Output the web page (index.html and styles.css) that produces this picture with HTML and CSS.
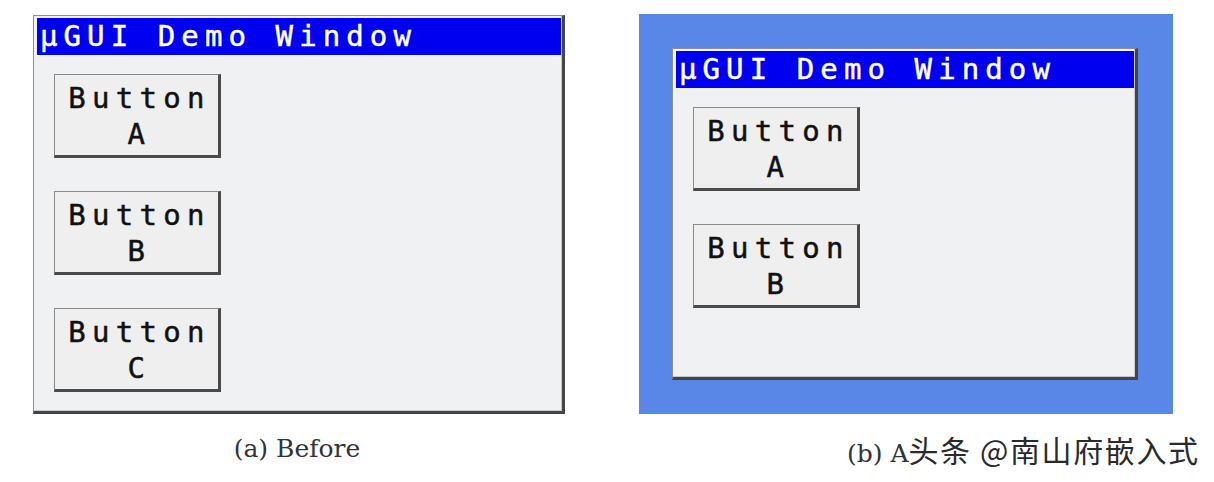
FILE: index.html
```html
<!DOCTYPE html>
<html>
<head>
<meta charset="utf-8">
<link rel="stylesheet" href="styles.css">
</head>
<body>
<div class="page">
  <figure class="fig fig-a">
    <div class="win win-a">
      <div class="title">μGUI Demo Window</div>
      <div class="btns">
        <div class="btn">Button<br>A</div>
        <div class="btn">Button<br>B</div>
        <div class="btn">Button<br>C</div>
      </div>
    </div>
    <figcaption class="cap cap-a">(a) Before</figcaption>
  </figure>
  <figure class="fig fig-b">
    <div class="desk">
      <div class="win win-b">
        <div class="title">μGUI Demo Window</div>
        <div class="btns">
          <div class="btn">Button<br>A</div>
          <div class="btn">Button<br>B</div>
        </div>
      </div>
    </div>
    <figcaption class="cap cap-b">(b) A<span class="wm">头条 @南山府嵌入式</span></figcaption>
  </figure>
</div>
</body>
</html>
```
FILE: styles.css
```css
html, body {
  margin: 0;
  padding: 0;
  background: #ffffff;
}
.page {
  display: flex;
  align-items: flex-start;
  padding-left: 33px;
  width: 1214px;
  height: 482px;
  box-sizing: border-box;
  overflow: hidden;
}
.fig {
  margin: 0;
  display: flex;
  flex-direction: column;
}
.fig-a {
  margin-top: 15px;
  width: 532px;
}
.fig-b {
  margin-top: 14px;
  margin-left: 74px;
  width: 534px;
}
.win {
  box-sizing: border-box;
  background: #f0f1f2;
  border-top: 1px solid #8e8e8e;
  border-left: 1px solid #8e8e8e;
  border-right: 3px solid #454545;
  border-bottom: 3px solid #454545;
  padding: 2px 1px 1px 3px;
  box-shadow: inset -1px -1px 0 #c8c8c8;
}
.win-a {
  width: 532px;
  height: 399px;
}
.desk {
  box-sizing: border-box;
  width: 534px;
  height: 400px;
  background: #5887e7;
  padding: 34px 0 0 33px;
}
.win-b {
  width: 466px;
  height: 332px;
}
.title {
  background: #0000f0;
  color: #ffffff;
  height: 37px;
  box-sizing: border-box;
  padding-left: 3px;
  font-family: "DejaVu Sans Mono", monospace;
  font-size: 29px;
  line-height: 37px;
  letter-spacing: 6.1px;
  -webkit-text-stroke: 0.5px #ffffff;
  white-space: nowrap;
  overflow: hidden;
}
.btns {
  display: flex;
  flex-direction: column;
  gap: 33px;
  padding: 19px 0 0 17px;
}
.btn {
  box-sizing: border-box;
  width: 167px;
  height: 84px;
  background: #efefef;
  border-top: 1px solid #8a8a8a;
  border-left: 1px solid #8a8a8a;
  border-right: 3px solid #4a4a4a;
  border-bottom: 3px solid #4a4a4a;
  color: #111111;
  font-family: "DejaVu Sans Mono", monospace;
  font-size: 29px;
  line-height: 36px;
  letter-spacing: 6.3px;
  -webkit-text-stroke: 0.5px #111111;
  text-align: center;
  padding: 5px 0 0 6px;
}
.cap {
  font-family: "DejaVu Serif", "Liberation Serif", serif;
  font-size: 25px;
  line-height: 34px;
  color: #333333;
  margin-top: 18px;
  white-space: nowrap;
}
.cap-a {
  text-align: center;
  padding-right: 4px;
}
.cap-b {
  padding-left: 208px;
}
.wm {
  font-family: "Noto Sans CJK SC", sans-serif;
  font-size: 30px;
  color: #2a2a2a;
  letter-spacing: 1.6px;
  margin-left: 0;
}
```
